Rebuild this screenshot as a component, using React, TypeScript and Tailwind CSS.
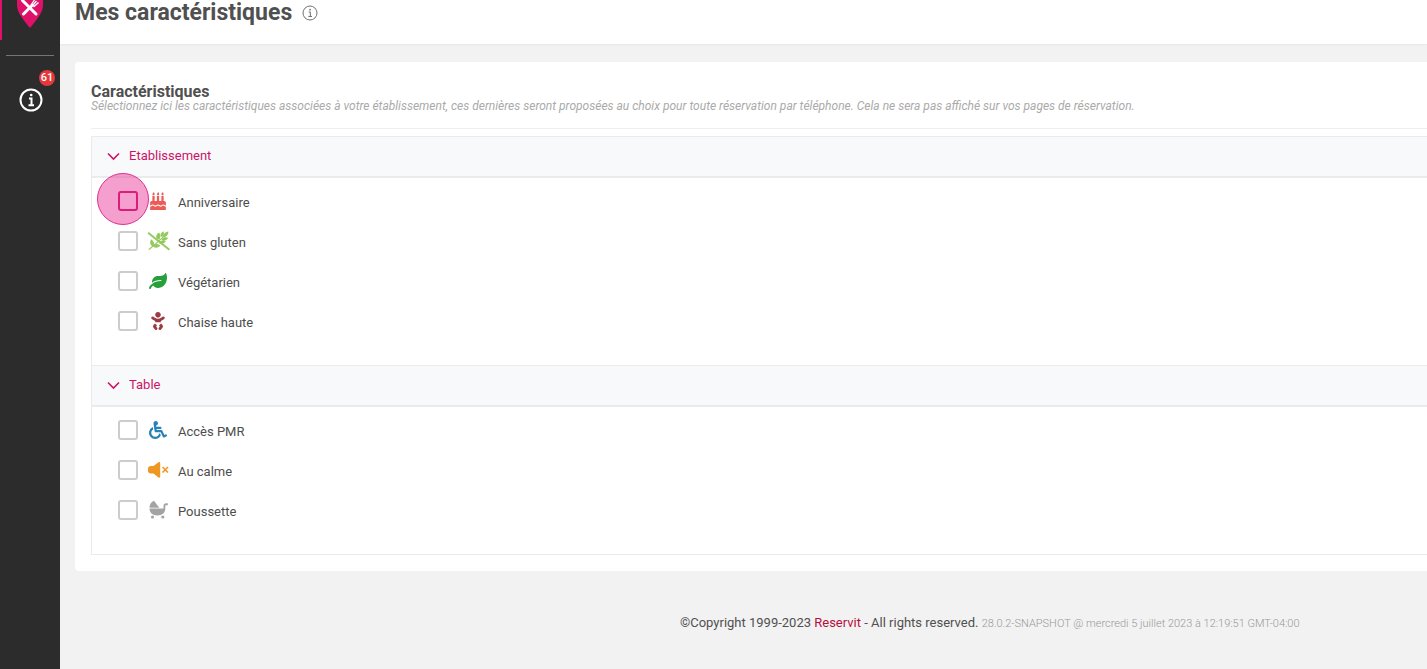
import React from 'react';
import { FaBaby, FaBirthdayCake, FaLeaf, FaWheelchair } from 'react-icons/fa';
import { clsx } from 'clsx';

interface Feature {
  id: string;
  label: string;
  icon: React.ReactNode;
  highlighted?: boolean;
}

interface Group {
  title: string;
  features: Feature[];
}

function GlutenFree() {
  return (
    <svg viewBox="0 0 24 20" className="w-6 h-5" fill="#93ca5c" aria-hidden="true">
      <path d="M10.500 7.500c-.8-2.700 0-4.700 2.600-6 1.600 2.400 1.600 4.400.2 7.200z" />
      <path d="M14.500 5.500c-.4-2.300.6-4 3-5.300.8 2 .5 3.800-.9 5.600z" />
      <path d="M17 5.400C17.400 2.800 19 1 22.500.5c0 2.900-2 5-4.500 6z" />
      <path d="M15.800 8.200c1.600-1.900 3.800-2.400 6.400-1.400-1.300 2.300-3.400 3.300-6.200 2.800z" />
      <path d="M13.200 11.500c1.600-2 4-2.500 6.600-1.400-1.300 2.400-3.400 3.400-6 2.800z" />
      <path d="M6.600 15.500c-2.800-2-3.200-4.500-1.400-7.300 2.600 1.700 3.400 4 2.600 6.600z" />
      <path d="M7.400 14.800c2-2.300 4.600-2.400 7-.2-2.200 2.500-5 2.600-7.400.8z" />
      <path d="M2.400 18.200l15.500-13.500.9.900-15.500 13.500z" />
      <path d="M1.500 2.600l1.200-1.500L24 18l-1.200 1.500z" />
    </svg>
  );
}

function Muted() {
  return (
    <svg viewBox="0 0 22 18" className="w-[22px] h-[18px]" fill="#ee9722" aria-hidden="true">
      <path d="M4 5h2.500L11.500 1.200c.8-.6 1.700-.2 1.700.8v13.600c0 1-.9 1.400-1.700.8L6.500 12.500H4c-1.800 0-3-1-3-2.500V7.500C1 6 2.200 5 4 5z" />
      <path d="M15.500 6l5.500 5.500M21 6l-5.500 5.500" stroke="#ee9722" strokeWidth="1.600" />
    </svg>
  );
}

function Stroller() {
  return (
    <svg viewBox="0 0 20 20" className="w-5 h-5" fill="#a3a3a3" aria-hidden="true">
      <path d="M1.500 7.700C1.500 4.300 3.400 1.800 6 .8l5.300 6.900z" />
      <path d="M1.500 8.600h14V6c0-1.700 1-2.700 2.600-2.700H19.800v1.900h-1.500c-.7 0-1 .4-1 1v2.400c0 4-2.900 6.900-7.900 6.900S1.500 12.600 1.500 8.600z" />
      <circle cx="4.500" cy="17" r="1.600" />
      <circle cx="14.800" cy="17" r="1.600" />
    </svg>
  );
}

const groups: Group[] = [
  {
    title: 'Etablissement',
    features: [
      { id: 'anniversaire', label: 'Anniversaire', icon: <FaBirthdayCake className="w-5 h-[18px] text-[#ec5b58]" />, highlighted: true },
      { id: 'sans-gluten', label: 'Sans gluten', icon: <GlutenFree /> },
      { id: 'vegetarien', label: 'Végétarien', icon: <FaLeaf className="w-[18px] h-5 text-[#27a03c]" /> },
      { id: 'chaise-haute', label: 'Chaise haute', icon: <FaBaby className="w-5 h-[18px] text-[#9b3c44]" /> },
    ],
  },
  {
    title: 'Table',
    features: [
      { id: 'acces-pmr', label: 'Accès PMR', icon: <FaWheelchair className="w-[18px] h-[18px] text-[#2583b8]" /> },
      { id: 'au-calme', label: 'Au calme', icon: <Muted /> },
      { id: 'poussette', label: 'Poussette', icon: <Stroller /> },
    ],
  },
];

function InfoIcon({ className, strokeWidth }: { className: string; strokeWidth: number }) {
  return (
    <svg viewBox="0 0 24 24" className={className} fill="none" stroke="currentColor" strokeWidth={strokeWidth} aria-hidden="true">
      <circle cx="12" cy="12" r="10.500" />
      <path d="M10 10.500h2.500V17M9.500 17.200h5.500" />
      <circle cx="12.200" cy="7" r="1.300" fill="currentColor" stroke="none" />
    </svg>
  );
}

function Sidebar() {
  return (
    <aside className="w-[60px] shrink-0 bg-[#2c2c2c] text-white">
      <a href="#restaurant" aria-label="Restaurant" className="flex h-10 justify-center border-l-2 border-[#dd1268] pr-0.5">
        <svg viewBox="0 0 26 28" className="w-[26px] h-7" aria-hidden="true">
          <path d="M0 0h26v5c0 7-5 13-13 23C5 18 0 12 0 5z" fill="#dd1268" />
          <path d="M5.500.5L19 14M6.500 14L15 5.500" stroke="#fff" strokeWidth="3" strokeLinecap="round" />
          <path d="M14 5l3.500-5M16.500 7l5-4.500M15 4l2.500 2.500M16.500 4.500L19.500 1" stroke="#fff" strokeWidth="1.300" />
        </svg>
      </a>
      <hr className="mx-1.5 mt-[15px] border-[#757575]" />
      <button type="button" aria-label="Informations" className="relative mt-8 ml-[19px] block">
        <InfoIcon className="w-6 h-6" strokeWidth={2} />
        <span className="absolute -top-[18px] left-5 flex h-4 w-4 items-center justify-center rounded-full bg-[#e5383b] text-[11px] font-medium">
          61
        </span>
      </button>
    </aside>
  );
}

function FeatureRow({ feature }: { feature: Feature }) {
  return (
    <li className="flex h-10 items-center">
      <span className="relative flex h-5 w-5">
        <input
          type="checkbox"
          id={feature.id}
          className={clsx(
            'h-5 w-5 appearance-none rounded-[3px] border-2',
            feature.highlighted ? 'border-[#cf1263]' : 'border-[#cccccc] bg-white'
          )}
        />
        {feature.highlighted && (
          <span className="pointer-events-none absolute -left-[21px] -top-[18px] h-[52px] w-[52px] rounded-full border border-[#e0308c] bg-[#e92a94]/45" />
        )}
      </span>
      <label htmlFor={feature.id} className="flex items-center text-[13px] leading-5 text-[#4d4d4d]">
        <span className="ml-2 flex w-6 justify-center">{feature.icon}</span>
        <span className="ml-2 pt-1">{feature.label}</span>
      </label>
    </li>
  );
}

function FeatureGroup({ group }: { group: Group }) {
  return (
    <section>
      <h3 className="border-t border-b-2 border-[#ebebeb] bg-[#f8f9fb]">
        <button type="button" aria-expanded="true" className="flex h-[39px] w-full items-center gap-2 pb-0.5 pl-[15px] text-[13px] text-[#cb1467]">
          <svg viewBox="0 0 14 14" className="w-3.5 h-3.5" fill="none" stroke="currentColor" strokeWidth="1.600" aria-hidden="true">
            <path d="M1 4.500L6.500 10l5.500-5.500" />
          </svg>
          {group.title}
        </button>
      </h3>
      <ul className="pt-[3px] pb-6 pl-[26px]">
        {group.features.map((feature) => (
          <FeatureRow key={feature.id} feature={feature} />
        ))}
      </ul>
    </section>
  );
}

export default function App() {
  return (
    <div className="flex min-h-screen bg-[#f2f2f2] font-[Roboto,sans-serif] text-[#505050]">
      <Sidebar />
      <div className="min-w-0 flex-1">
        <header className="flex h-11 items-start gap-2.5 bg-white pl-[15px] shadow-xs">
          <h1 className="text-[23px] leading-[26px] font-bold">Mes caractéristiques</h1>
          <InfoIcon className="mt-[5px] h-4 w-4 text-[#707070]" strokeWidth={1.5} />
        </header>

        <main className="mt-[18px] ml-[15px] rounded-l-sm bg-white pb-4 pl-4">
          <div className="border-b border-[#eeeeee] pt-[22px] pb-4">
            <h2 className="text-base leading-4 font-bold">Caractéristiques</h2>
            <p className="text-xs leading-3 italic text-[#aaaaaa]">
              Sélectionnez ici les caractéristiques associées à votre établissement, ces dernières seront proposées au choix pour toute réservation par téléphone. Cela ne sera pas affiché sur vos pages de réservation.
            </p>
          </div>
          <div className="mt-[7px] border-b border-l border-[#ebebeb]">
            {groups.map((group) => (
              <FeatureGroup key={group.title} group={group} />
            ))}
          </div>
        </main>

        <footer className="pt-[42px] pb-9 pl-[620px] text-[13px] leading-5 whitespace-nowrap">
          ©Copyright 1999-2023 <a href="#reservit" className="text-[#b80f3f]">Reservit</a> - All rights reserved.{' '}
          <small className="text-[11px] font-light text-[#999999]">28.0.2-SNAPSHOT @ mercredi 5 juillet 2023 à 12:19:51 GMT-04:00</small>
        </footer>
      </div>
    </div>
  );
}
